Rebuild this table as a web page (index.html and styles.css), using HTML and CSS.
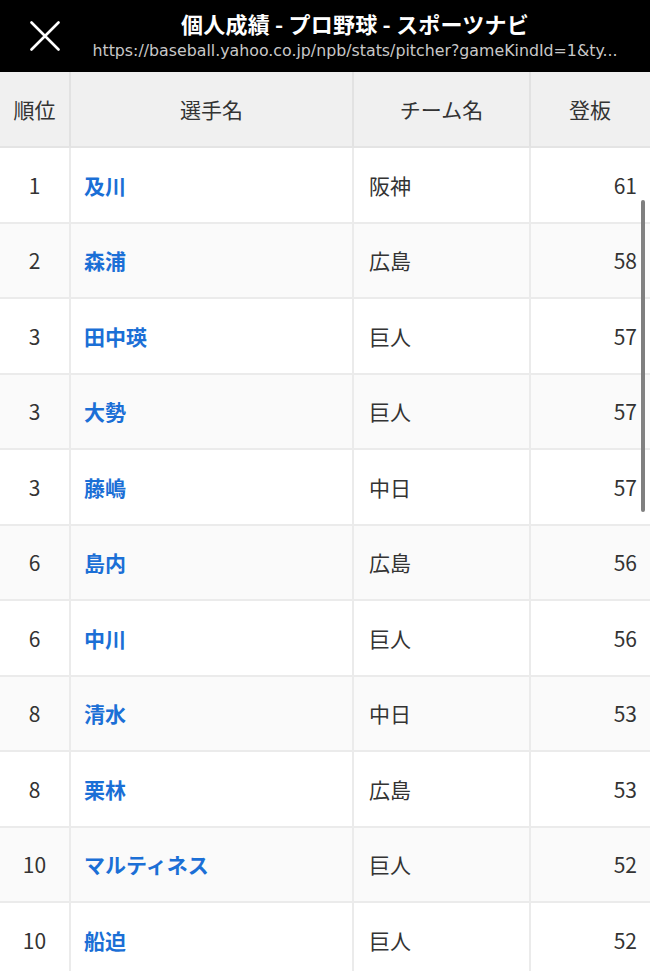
FILE: index.html
```html
<!DOCTYPE html>
<html lang="ja">
<head>
<meta charset="utf-8">
<title>個人成績 - プロ野球 - スポーツナビ</title>
<link rel="stylesheet" href="styles.css">
</head>
<body>
<header class="bar">
  <div class="close">
    <svg width="30" height="30" viewBox="0 0 30 30"><path d="M1.5 1.5 L28.5 28.5 M28.5 1.5 L1.5 28.5" stroke="#fff" stroke-width="2.6" stroke-linecap="round" fill="none"/></svg>
  </div>
  <div class="titles">
    <div class="title">個人成績 - プロ野球 - スポーツナビ</div>
    <div class="url">https://baseball.yahoo.co.jp/npb/stats/pitcher?gameKindId=1&amp;ty...</div>
  </div>
</header>
<main class="wrap">
<table class="stats">
  <thead>
    <tr><th class="c-rank">順位</th><th class="c-name">選手名</th><th class="c-team">チーム名</th><th class="c-num">登板</th></tr>
  </thead>
  <tbody>
    <tr><td class="c-rank">1</td><td class="c-name"><a>及川</a></td><td class="c-team">阪神</td><td class="c-num">61</td></tr>
    <tr><td class="c-rank">2</td><td class="c-name"><a>森浦</a></td><td class="c-team">広島</td><td class="c-num">58</td></tr>
    <tr><td class="c-rank">3</td><td class="c-name"><a>田中瑛</a></td><td class="c-team">巨人</td><td class="c-num">57</td></tr>
    <tr><td class="c-rank">3</td><td class="c-name"><a>大勢</a></td><td class="c-team">巨人</td><td class="c-num">57</td></tr>
    <tr><td class="c-rank">3</td><td class="c-name"><a>藤嶋</a></td><td class="c-team">中日</td><td class="c-num">57</td></tr>
    <tr><td class="c-rank">6</td><td class="c-name"><a>島内</a></td><td class="c-team">広島</td><td class="c-num">56</td></tr>
    <tr><td class="c-rank">6</td><td class="c-name"><a>中川</a></td><td class="c-team">巨人</td><td class="c-num">56</td></tr>
    <tr><td class="c-rank">8</td><td class="c-name"><a>清水</a></td><td class="c-team">中日</td><td class="c-num">53</td></tr>
    <tr><td class="c-rank">8</td><td class="c-name"><a>栗林</a></td><td class="c-team">広島</td><td class="c-num">53</td></tr>
    <tr><td class="c-rank">10</td><td class="c-name"><a>マルティネス</a></td><td class="c-team">巨人</td><td class="c-num">52</td></tr>
    <tr><td class="c-rank">10</td><td class="c-name"><a>船迫</a></td><td class="c-team">巨人</td><td class="c-num">52</td></tr>
  </tbody>
</table>
<div class="scrollbar"></div>
</main>
</body>
</html>
```
FILE: styles.css
```css
* { box-sizing: border-box; }
html, body { margin: 0; padding: 0; }
body {
  width: 650px;
  height: 971px;
  overflow: hidden;
  background: #fff;
  font-family: "Noto Sans CJK JP", "Noto Sans", sans-serif;
  color: #333;
}
.bar {
  height: 72px;
  background: #000;
  display: flex;
  align-items: center;
}
.close {
  width: 60px;
  height: 72px;
  display: flex;
  align-items: center;
  justify-content: flex-end;
}
.titles {
  flex: 1;
  display: flex;
  flex-direction: column;
  align-items: center;
  min-width: 0;
}
.title {
  color: #fff;
  font-weight: bold;
  font-size: 22px;
  line-height: 26px;
  margin-top: -2px;
  letter-spacing: 0.2px;
}
.url {
  color: #c8c8c8;
  font-family: "DejaVu Sans", "Liberation Sans", sans-serif;
  font-size: 15.8px;
  line-height: 20px;
  margin-top: 5px;
  white-space: nowrap;
}
.wrap {
  position: relative;
}
.stats {
  border-collapse: separate;
  border-spacing: 0;
  table-layout: fixed;
  width: 650px;
}
.stats th, .stats td {
  border-right: 2px solid #ebebeb;
  border-bottom: 2px solid #ebebeb;
  font-size: 21px;
  padding: 0;
  white-space: nowrap;
}
.stats th {
  background: #f0f0f0;
  font-weight: normal;
  color: #333;
  height: 76px;
  border-bottom-color: #e4e4e4;
  border-right-color: #e2e2e2;
}
.stats td { height: 75.5px; }
.stats tbody tr:nth-child(even) td { background: #fafafa; }
.c-rank { width: 71px; text-align: center; }
.c-name { width: 283px; }
.c-team { width: 177px; }
.c-num { width: 119px; }
.stats th.c-num, .stats td.c-num { border-right: none; }
.stats th.c-name, .stats th.c-team { text-align: center; }
.stats th.c-num { text-align: left; padding-left: 38px; }
.stats td.c-name { padding-left: 13px; }
.stats td.c-team { padding-left: 15px; }
.stats td.c-num { text-align: right; padding-right: 13px; }
.stats td.c-name a {
  color: #1b6fd6;
  font-weight: bold;
  text-decoration: none;
}
.scrollbar {
  position: absolute;
  left: 641px;
  top: 128px;
  width: 4px;
  height: 312px;
  border-radius: 2px;
  background: #808080;
}
```
